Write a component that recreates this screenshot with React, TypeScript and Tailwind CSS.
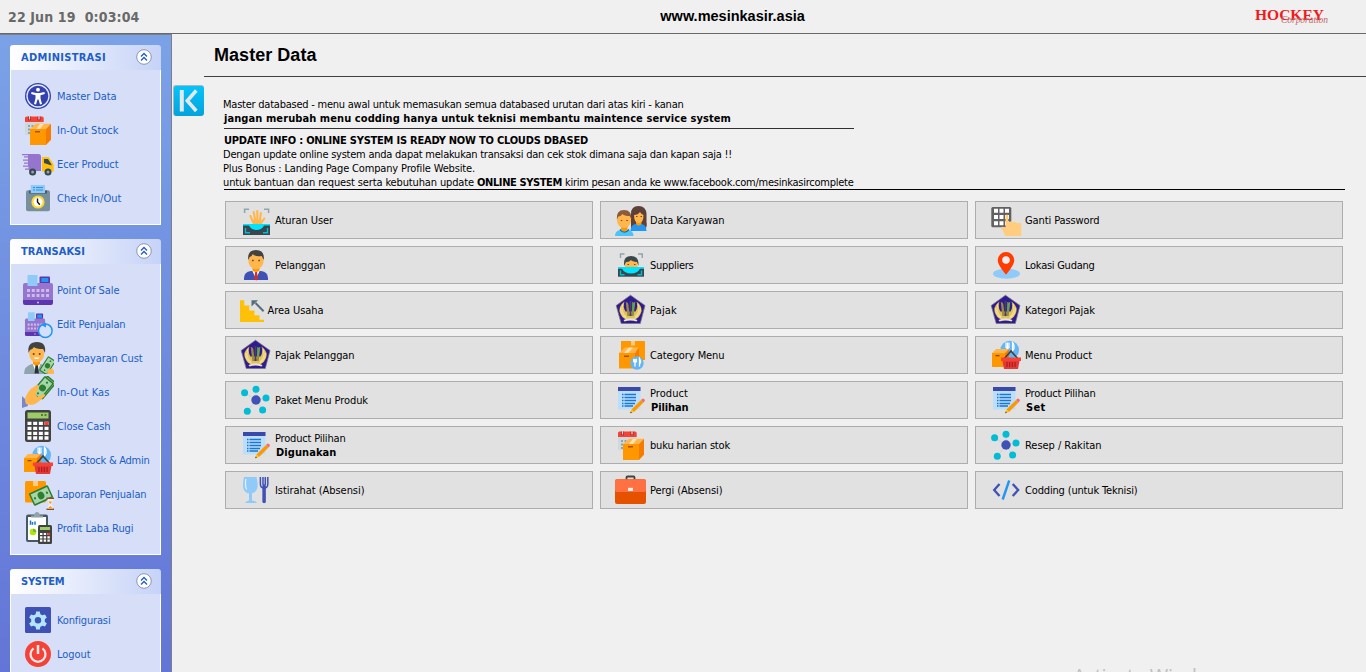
import { useLayoutEffect, useRef, useState, type ReactNode } from "react";

/* Text whose tracking is adjusted so that it fills a given width. */
function Fit({ w, className = "", children }: { w: number; className?: string; children: string }) {
  const ref = useRef<HTMLSpanElement>(null);
  const [spacing, setSpacing] = useState(0);
  useLayoutEffect(() => {
    if (ref.current) {
      const natural = ref.current.getBoundingClientRect().width;
      setSpacing((w - natural) / children.length);
    }
  }, []);
  return (
    <span ref={ref} className={`inline-block whitespace-pre ${className}`} style={{ letterSpacing: `${spacing}px` }}>
      {children}
    </span>
  );
}

function Svg({ children }: { children: ReactNode }) {
  return (
    <svg viewBox="0 0 32 32" className="h-8 w-8 shrink-0">
      {children}
    </svg>
  );
}

const AccessIcon = () => (
  <Svg>
    <circle cx="16" cy="16" r="13" fill="#3442ae" />
    <circle cx="16" cy="16" r="11" fill="none" stroke="#e4eaff" strokeWidth="1.3" />
    <circle cx="16" cy="9.7" r="1.9" fill="#fff" />
    <path d="M9.5 12l4.800 1h3.400l4.800-1 .3 1.900-4.300 1.400v3l1.500 5.600-2 .5-1.500-5h-1l-1.500 5-2-.5 1.500-5.600v-3l-4.300-1.400z" fill="#fff" />
  </Svg>
);

const StockIcon = () => (
  <Svg>
    <path d="M3 7h18.500v14H3z" fill="#cfd8dc" />
    <path d="M3 4q0-1.500 1.500-1.500H20q1.700 0 1.700 1.500v4H3z" fill="#f44336" />
    <path d="M7.500 2.500v3.800M17 2.500v3.800" stroke="#b71c1c" strokeWidth="3" />
    <path d="M7.500 2v3.500M17 2v3.500" stroke="#cfd8dc" strokeWidth="1.300" />
    <path d="M6 11h2v2H6zM9.500 11h2v2h-2zM6 14.500h2v2H6zM6 18h2v2H6z" fill="#90a4ae" />
    <path d="M8 15l6-5.300h15L24 15z" fill="#ffb74d" />
    <path d="M24 15l5-5.300v16L24 31z" fill="#f57c00" />
    <path d="M8 15h16v16H8z" fill="#ff9800" />
    <path d="M14 15l4-5.300h4L18 15z" fill="#ffe0b2" />
    <path d="M13 17h5v1.500h-5z" fill="#a65300" />
  </Svg>
);

const TruckIcon = () => (
  <Svg>
    <path d="M0 6h16.500q2.500 0 2.500 2.500V23H7v-1.300H3v-1.200h3.500v-1.700H1v-1.300h5v-1.700H2v-1.300h4v-1.700H1v-1.300h5V9.500H2V8.200h4V7.300H0z" fill="#9575cd" />
    <path d="M20 9h6.500l4 5.500q1.200 1.600 1.200 3.500v5.500H20z" fill="#ffc107" />
    <path d="M22 11h4l3.500 5.500v1L22 15z" fill="#37474f" />
    <circle cx="10.600" cy="24" r="3.500" fill="#37474f" />
    <circle cx="10.600" cy="24" r="1.500" fill="#90a4ae" />
    <circle cx="26" cy="24" r="3.500" fill="#37474f" />
    <circle cx="26" cy="24" r="1.500" fill="#90a4ae" />
  </Svg>
);

const ClockInIcon = () => (
  <Svg>
    <rect x="4" y="8.300" width="24" height="21" rx="2" fill="#78909c" />
    <path d="M7 8.500h18v3H7z" fill="#455a64" />
    <path d="M8.700 3H23v8H8.700z" fill="#90caf9" />
    <path d="M11 5.500h2m1 0h7M11 8h2m1 0h7" stroke="#2f8fe0" />
    <circle cx="16" cy="20" r="6.600" fill="#fdd835" />
    <circle cx="16" cy="20" r="4.500" fill="#fff" />
    <path d="M15.500 16.500V20l2.300 2.700" fill="none" stroke="#111" strokeWidth="1.400" />
  </Svg>
);

const Register = () => (
  <>
    <path d="M21 8h3v3h-3z" fill="#5e35b1" />
    <rect x="17.500" y="2.500" width="10.500" height="7" rx="1" fill="#5e35b1" />
    <path d="M19.300 4h7v4h-7z" fill="#2196f3" />
    <path d="M3 9H29q2 0 2 2v16H1V11q0-2 2-2z" fill="#9575cd" />
    <path d="M5.500 1h10v11h-10z" fill="#90caf9" />
    <path d="M1 26h30v3q0 2-2 2H3q-2 0-2-2z" fill="#5e35b1" />
    <path d="M5 16.500h22M5 21.500h22" stroke="#cdb9ea" strokeWidth="2.800" strokeDasharray="3 1.750" />
    <circle cx="16" cy="28.500" r="1" fill="#d1c4e9" />
  </>
);

const RegisterIcon = () => (
  <Svg>
    <Register />
  </Svg>
);

const RegisterEditIcon = () => (
  <Svg>
    <g transform="translate(2.300 3.500) scale(.67 .79)">
      <Register />
    </g>
    <circle cx="23.300" cy="22.700" r="6.800" fill="#d6dff7" stroke="#2196f3" strokeWidth="1.500" />
    <path d="M19 17l5-2.500v5z" fill="#2196f3" />
  </Svg>
);

const Bill = () => (
  <>
    <rect x="-10" y="-5.500" width="20" height="11" rx="1" fill="#2e7d32" />
    <rect x="-8.600" y="-4.200" width="17.200" height="8.400" fill="#a5d6a7" />
    <circle r="3.100" fill="#2e7d32" />
    <circle cx="-6.300" r="1" fill="#2e7d32" />
    <circle cx="6.300" r="1" fill="#2e7d32" />
  </>
);

const PayerIcon = () => (
  <Svg>
    <path d="M2 32q0-8 8-10h9q8 2 8 10z" fill="#90a4ae" />
    <path d="M10.500 21.500h8L14.700 32z" fill="#fff" />
    <path d="M13.500 23h2.400l1 8.500h-4.400z" fill="#263238" />
    <path d="M11 17h7v5q-3.500 3-7 0z" fill="#ff9800" />
    <ellipse cx="14.700" cy="12" rx="7.500" ry="8.500" fill="#ffb74d" />
    <path d="M6.500 11Q5 0 15 0q9.500 0 8 11l-2-4q-7 0-9-2-1 2-4 3z" fill="#424242" />
    <circle cx="11.700" cy="12" r="1" fill="#6d3b18" />
    <circle cx="17.700" cy="12" r="1" fill="#6d3b18" />
    <path d="M11.500 15.500q3.200 3 6.400 0z" fill="#fff" />
    <g transform="translate(25.500 23.700) rotate(-57) scale(.85)">
      <Bill />
    </g>
    <path d="M25 32l1-4 4-2 2 3v3z" fill="#ffb74d" />
  </Svg>
);

const CashHandIcon = () => (
  <Svg>
    <path d="M0 20l5 5 1 5-6 2z" fill="#7986cb" />
    <g transform="translate(23 11.500) rotate(-50) scale(1.100)">
      <Bill />
    </g>
    <g transform="translate(20.500 12) rotate(-50) scale(1.100)">
      <Bill />
    </g>
    <path d="M4 28q-2-5 0-8 3-6 6-8l5-3q2.500 0 1.500 3l-3 6 2 3 6-3q2.500 0 1 2.500l-7 6q-4 3.500-9 2z" fill="#ffb74d" />
  </Svg>
);

const CalcIcon = () => (
  <Svg>
    <rect x="3" y="0" width="26" height="32" rx="2.500" fill="#424242" />
    <rect x="5.500" y="2.500" width="21" height="6" fill="#9ccc65" />
    <path d="M19 5h2m1.500 0h2" stroke="#33691e" strokeWidth="1.300" />
    <path d="M5.500 13.300h21M5.500 18.300h21M5.500 23.300h21M5.500 28h21" stroke="#fff" strokeWidth="3.300" strokeDasharray="4 1.670" />
    <path d="M22.500 11.600h4V15h-4z" fill="#f44336" />
  </Svg>
);

const BasketIcon = () => (
  <Svg>
    <circle cx="19.700" cy="11" r="9.300" fill="#64b5f6" />
    <path d="M16 3.500v5q1.500 1.500 3 0v-5M17.500 3.500v8M22.500 12V3.500q2 2 1.500 6z" fill="none" stroke="#fff" strokeWidth="1.200" />
    <path d="M2 14l4-4h13v4z" fill="#ffb74d" />
    <path d="M2 14h13v14H2z" fill="#ff9800" />
    <path d="M15 14l4-4v11l-4 6z" fill="#f57c00" />
    <path d="M5.500 16h4v1.300h-4z" fill="#8d4a00" />
    <path d="M14 20l7-8 7 8" fill="none" stroke="#37474f" strokeWidth="1.800" />
    <path d="M11 18.500h20v3.500H11z" fill="#f44336" />
    <path d="M12.500 22h17L28 30H14z" fill="#e53935" />
    <path d="M17 23v5m2.700-5v5m2.700-5v5m2.700-5v5" stroke="#b01e1e" strokeWidth="1.300" />
  </Svg>
);

const SalesReportIcon = () => (
  <Svg>
    <rect x="3" y="3" width="21" height="21.500" rx="1.500" fill="#ff9800" />
    <path d="M11 3h5v5h-5z" fill="#ffcc80" />
    <g transform="translate(19 17.500) rotate(-25) scale(1.050 1.250)">
      <Bill />
    </g>
    <path d="M24.500 20.300h7.500M24.500 31.300h7.500" stroke="#8d4a2b" strokeWidth="1.500" />
    <path d="M25.500 21h5.500q0 3-2 5 2 2 2 4.500h-5.500q0-2.500 2-4.500-2-2-2-5z" fill="#eceff1" />
    <path d="M26.500 23.500h3.500L28.300 26zM25.800 30.500l2.500-2.500 2.500 2.500z" fill="#ff9800" />
  </Svg>
);

const ProfitIcon = () => (
  <Svg>
    <rect x="4" y="2.500" width="22" height="27.500" rx="2" fill="#455a64" />
    <path d="M6 5h18v23H6z" fill="#fff" />
    <path d="M9 5.500V3.500h3Q12.500 0 15 0t3 3.500h3v2z" fill="#90a4ae" />
    <path d="M8.500 8.500v4.200M10.500 10v2.700M13 9.500v3.200" stroke="#1976d2" strokeWidth="1.500" />
    <circle cx="11" cy="20" r="3.300" fill="#aeea00" />
    <path d="M11 20v-3.300a3.300 3.300 0 013.300 3.300z" fill="#7cb342" />
    <rect x="16" y="13" width="14" height="19" rx="1.500" fill="#424242" />
    <path d="M18 15h10v3H18z" fill="#9ccc65" />
    <path d="M18 22h10M18 25.300h10M18 28.700h10" stroke="#fff" strokeWidth="2.200" strokeDasharray="2.400 1.300" />
    <path d="M25.400 20.900H28v2.200h-2.600z" fill="#f44336" />
  </Svg>
);

const GearIcon = () => (
  <Svg>
    <rect x="3" y="3" width="26" height="26" rx="1.500" fill="#3f51b5" />
    <path
      d="M14.200 7.500h3.600l.6 2.700 2 1.100 2.600-.9 1.800 3.100-2 1.800v2.400l2 1.800-1.800 3.100-2.600-.9-2 1.100-.6 2.700h-3.600l-.6-2.700-2-1.100-2.600.9-1.800-3.100 2-1.800v-2.400l-2-1.800L9 10.400l2.600.9 2-1.100z"
      fill="#b3e5fc"
    />
    <circle cx="16" cy="16.200" r="3.200" fill="#3f51b5" />
  </Svg>
);

const PowerIcon = () => (
  <Svg>
    <circle cx="16" cy="16" r="13" fill="#f44336" />
    <path d="M11.500 10.300a7.500 7.500 0 109 0" fill="none" stroke="#ffebee" strokeWidth="2.200" />
    <path d="M16 7v9" stroke="#ffebee" strokeWidth="2.500" />
  </Svg>
);

const HandScanIcon = () => (
  <Svg>
    <path d="M4.600 9V5.200h4.500M24 5.200h4.600V9" fill="none" stroke="#90a4ae" strokeWidth="1.500" />
    <path d="M10.500 12l2.500 6M13.700 8l1.600 9M17.300 7v10M20.800 9l-1 8M24.300 14.500L20.500 20" stroke="#ffb74d" strokeWidth="2.100" strokeLinecap="round" />
    <path d="M11 15.500h10.500v4L19 22h-5z" fill="#ffb74d" />
    <path d="M3 20h27v11H3z" fill="#37474f" />
    <path d="M3 20h27v1.600h-6Q22 26 16.500 26T9 21.600H3z" fill="#00e5ff" />
    <path d="M5.500 24v4.700H10M27.500 24v4.700H23" fill="none" stroke="#00bcd4" strokeWidth="1.400" />
  </Svg>
);

const CustomerIcon = () => (
  <Svg>
    <path d="M4 31v-2q0-6 7-7h10q7 1 7 7v2z" fill="#3f51b5" />
    <path d="M12 21h8l-4 9z" fill="#fff" />
    <path d="M15.200 23h1.800l1 7-1.800 1.500-2-1.500z" fill="#d32f2f" />
    <path d="M12.500 18h7v3.500q-3.500 3-7 0z" fill="#ff9800" />
    <ellipse cx="16" cy="12" rx="7.600" ry="8.300" fill="#ffb74d" />
    <path d="M8.300 11Q7 1 16 1t7.700 10l-2-4q-6 1-9-2-1 3-3 3z" fill="#424242" />
    <path d="M12 11.500h1.700m4.600 0H20" stroke="#784719" strokeWidth="1.400" />
  </Svg>
);

const StairsIcon = () => (
  <Svg>
    <path d="M0 6.300h4.300v5.200h5v5h5.200v4.800h5v4.500H24V28H0z" fill="#ffc107" />
    <path d="M23.600 17.200L15.500 9" stroke="#546e7a" strokeWidth="2" />
    <path d="M11.500 6.200h6.600l-6.600 6.200z" fill="#546e7a" />
  </Svg>
);

const TaxIcon = () => (
  <Svg>
    <path d="M15.500 1.200L30 11.500 25.300 29.500H6.200L1.200 11.500z" fill="#311b92" stroke="#777" strokeWidth=".7" />
    <path d="M9.500 7.500Q2 13 5.500 20q2.500 6 10 6t10-6Q29 13 21.500 7.500q2 5-1 10h-10q-3-5-1-10z" fill="#e0c25c" />
    <path d="M8 10q-3 7 3 13M23 10q3 7-3 13M5.500 14q0 7 6 10.500M25.500 14q0 7-6 10.500" fill="none" stroke="#f4e08f" strokeWidth="1.100" />
    <path d="M10.800 8q2 0 2.500 2l1.200 10h2l1.200-10q.5-2 2.500-2l-1.500 14h-6.400z" fill="#9a8a45" />
    <path d="M15.500 7v15" stroke="#4a3d62" strokeWidth="1.800" />
    <path d="M17.800 8v10l1.500-9" fill="none" stroke="#4caf50" strokeWidth="1.100" />
    <path d="M8.500 26q7-3.500 14 0l-1 1.600q-6-2-12 0z" fill="#e8e5d5" />
  </Svg>
);

const NetworkIcon = () => (
  <Svg>
    <path d="M4.500 8.500L16 16l6.500 10M16 5v11l-8.700 11.300M26 14l-10 2" fill="none" stroke="#cfd8dc" strokeWidth="1.300" />
    <circle cx="16" cy="16" r="4.700" fill="#3f51b5" />
    <g fill="#00bcd4">
      <circle cx="4.600" cy="8.700" r="3.500" />
      <circle cx="16" cy="5.300" r="3.500" />
      <circle cx="26" cy="14" r="3.500" />
      <circle cx="22.600" cy="26" r="3.500" />
      <circle cx="7.300" cy="27.300" r="3.500" />
    </g>
  </Svg>
);

const FormIcon = () => (
  <Svg>
    <path d="M3 3h22.500v22.500H3z" fill="#bbdefb" />
    <path d="M3 3h22.500v4H3z" fill="#3949ab" />
    <path d="M7 10.500h1.500m1 0H21M7 13.500h1.500m1 0H21M7 16.500h1.500m1 0H21M7 19.500h1.500m1 0H20M7 22h1.500m1 0H18" stroke="#1976d2" strokeWidth="1.300" />
    <path d="M16.500 25.500L26 16l2.500 2.500L19 28z" fill="#ff9800" />
    <path d="M26 16l1.300-1.300q.8-.6 1.600.2l.7.700q.6.800 0 1.600l-1.100 1.300z" fill="#ef6c74" />
    <path d="M16.500 25.500L19 28l-4 1.300z" fill="#ffc107" />
    <path d="M15.800 27.500l1.200 1.200-2 .6z" fill="#37474f" />
  </Svg>
);

const MealIcon = () => (
  <Svg>
    <path d="M4 3h12.500Q18.500 11 17 15q-1.500 3.800-5 4.300v7.200q4 .5 5 2.500H5q1-2 4-2.500v-7.200Q5 19 3.500 15 2.300 11 4 3z" fill="#90caf9" />
    <path d="M5.800 5q-1 8 1 10.500" fill="none" stroke="#e3f2fd" strokeWidth="1.200" />
    <path d="M20.400 3v7q0 4 3.700 4t3.700-4V3M23 3v8M25.300 3v8" fill="none" stroke="#3f51b5" strokeWidth="1.500" />
    <path d="M24.100 12v15.500" stroke="#3f51b5" strokeWidth="3.500" strokeLinecap="round" />
  </Svg>
);

const StaffIcon = () => (
  <Svg>
    <path d="M16 25V10q0-8 7.500-8t8 8v8q1 6-2 7z" fill="#5d4037" />
    <path d="M15.500 27q0-6 5-7h6q5 1 5 7z" fill="#2196f3" />
    <path d="M21 17h5.500v3q-2.700 3-5.500 0z" fill="#ff9800" />
    <path d="M19 11q4 0 6-3 1 2 3.500 3 0 8-4.700 8T19 11z" fill="#ffb74d" />
    <path d="M0 32q0-5 5-6h8.500q5 1 5 6z" fill="#4fc3f7" />
    <path d="M5 25.500q4.500 5 9 0" fill="none" stroke="#0277bd" strokeWidth="1.500" />
    <path d="M6 22h6.500v4q-3.200 3-6.500 0z" fill="#ff9800" />
    <ellipse cx="9" cy="16.500" rx="7" ry="7.500" fill="#ffb74d" />
    <path d="M1.800 15.500Q1 6 9 6t7.500 9.500l-2-3.500q-5 0-7-2-2 2.500-4 2.500z" fill="#8d5a3b" />
    <path d="M5.800 16.500h1.500m4 0h1.500M21 12.500h1.500m3 0H27" stroke="#784719" strokeWidth="1.200" />
  </Svg>
);

const FaceScanIcon = () => (
  <Svg>
    <path d="M5.500 9V5h4M23 5h4.300v4" fill="none" stroke="#90a4ae" strokeWidth="1.400" />
    <path d="M10 19V11q6-3 12.500 0v8z" fill="#ffb74d" />
    <path d="M9 17V14q0-7 7-7t7.500 7v3l-1.500-4q-5-.5-6-2-2 2.500-5 2z" fill="#37474f" />
    <path d="M12.500 15.500H14m5 0h1.500" stroke="#784719" strokeWidth="1.200" />
    <path d="M3 18h26v9.700H3z" fill="#37474f" />
    <path d="M3 18h26v1.700h-4Q22.500 24.500 16 24.500T7 19.700H3z" fill="#00e5ff" />
    <path d="M5.500 21.500v4.200h4M26.500 21.500v4.200h-4" fill="none" stroke="#00bcd4" strokeWidth="1.400" />
  </Svg>
);

const CategoryIcon = () => (
  <Svg>
    <path d="M6 2h23q1 0 1 1v18h-8V13H6z" fill="#ff9800" />
    <path d="M16 2h4v4.500h-4z" fill="#ffcc80" />
    <path d="M4 14l6-5.500h14L20 14z" fill="#ffb74d" />
    <path d="M4 14h16v15.500H4z" fill="#ff9800" />
    <path d="M20 14l4-5.500V29h-4z" fill="#f57c00" />
    <path d="M9 14l5-5.500h4L13 14z" fill="#ffe0b2" />
    <path d="M9 16.500h5v1.500H9z" fill="#a65300" />
    <circle cx="22" cy="24" r="6.700" fill="#64b5f6" />
    <path d="M18.700 19.800v2.700q1.500 1.500 2.700 0v-2.700M20 20v7.500M24.500 27.500v-8q1.500 2 .8 5" fill="none" stroke="#fff" strokeWidth="1.300" />
  </Svg>
);

const KeypadIcon = () => (
  <Svg>
    <rect x="1.300" y="3" width="20" height="20.300" rx="1.500" fill="#616161" />
    <path d="M4 6.800h15M4 13h15M4 19.300h15" stroke="#fff" strokeWidth="4" strokeDasharray="4 1.500" />
    <path d="M15.500 12q0-1.600 1.400-1.600T18.300 12v6l3-.7 1.500 1 3-.3 1.500 1.200 3-.3q1 .3 1 1.500V32H15q-1-4-4-8 1-2.500 4.500 0z" fill="#ffcc80" />
  </Svg>
);

const PinIcon = () => (
  <Svg>
    <ellipse cx="16.500" cy="24.700" rx="13.500" ry="5" fill="#90caf9" />
    <path d="M16 25.700Q7.700 16 7.700 11.300a8.300 8.300 0 0116.600 0Q24.300 16 16 25.700z" fill="#ff3d00" />
    <circle cx="16" cy="11" r="3.800" fill="#eceff1" />
  </Svg>
);

const BriefcaseIcon = () => (
  <Svg>
    <path d="M11.500 6V3.500q0-1 1-1h6q1 0 1 1V6" fill="none" stroke="#424242" strokeWidth="1.800" />
    <rect x="0" y="5.300" width="31" height="24.700" rx="2" fill="#e65100" />
    <path d="M0 7.300q0-2 2-2h27q2 0 2 2V16q0 2-2 2H2q-2 0-2-2z" fill="#ff7043" />
    <path d="M13 13.800h5V17h-5z" fill="#fff3e0" />
  </Svg>
);

const CodeIcon = () => (
  <Svg>
    <path d="M9.500 10L4.200 16l5.300 6M22.700 10l5.500 6-5.500 6" fill="none" stroke="#3f51b5" strokeWidth="2.300" />
    <path d="M19.200 6.500l-6.500 19" stroke="#2196f3" strokeWidth="2.400" />
  </Svg>
);

type Item = { icon: () => ReactNode; label: string; w: number };

const groups: { title: string; w: number; items: Item[] }[] = [
  {
    title: "ADMINISTRASI",
    w: 85,
    items: [
      { icon: AccessIcon, label: "Master Data", w: 59.5 },
      { icon: StockIcon, label: "In-Out Stock", w: 61.5 },
      { icon: TruckIcon, label: "Ecer Product", w: 61.5 },
      { icon: ClockInIcon, label: "Check In/Out", w: 64.5 },
    ],
  },
  {
    title: "TRANSAKSI",
    w: 64,
    items: [
      { icon: RegisterIcon, label: "Point Of Sale", w: 62.5 },
      { icon: RegisterEditIcon, label: "Edit Penjualan", w: 68.5 },
      { icon: PayerIcon, label: "Pembayaran Cust", w: 85.5 },
      { icon: CashHandIcon, label: "In-Out Kas", w: 52.5 },
      { icon: CalcIcon, label: "Close Cash", w: 53.5 },
      { icon: BasketIcon, label: "Lap. Stock & Admin", w: 92.5 },
      { icon: SalesReportIcon, label: "Laporan Penjualan", w: 89.5 },
      { icon: ProfitIcon, label: "Profit Laba Rugi", w: 76.5 },
    ],
  },
  {
    title: "SYSTEM",
    w: 43.5,
    items: [
      { icon: GearIcon, label: "Konfigurasi", w: 53.5 },
      { icon: PowerIcon, label: "Logout", w: 33.5 },
    ],
  },
];

const buttons: (Item & { bold?: string; boldW?: number; tight?: boolean })[] = [
  { icon: HandScanIcon, label: "Aturan User", w: 58 },
  { icon: StaffIcon, label: "Data Karyawan", w: 74.5 },
  { icon: KeypadIcon, label: "Ganti Password", w: 74.5 },
  { icon: CustomerIcon, label: "Pelanggan", w: 50.5 },
  { icon: FaceScanIcon, label: "Suppliers", w: 43.5 },
  { icon: PinIcon, label: "Lokasi Gudang", w: 69.5 },
  { icon: StairsIcon, label: "Area Usaha", w: 56, tight: true },
  { icon: TaxIcon, label: "Pajak", w: 27 },
  { icon: TaxIcon, label: "Kategori Pajak", w: 70 },
  { icon: TaxIcon, label: "Pajak Pelanggan", w: 79.5 },
  { icon: CategoryIcon, label: "Category Menu", w: 74.5 },
  { icon: BasketIcon, label: "Menu Product", w: 67 },
  { icon: NetworkIcon, label: "Paket Menu Produk", w: 93 },
  { icon: FormIcon, label: "Product", w: 38, bold: "Pilihan", boldW: 37.5 },
  { icon: FormIcon, label: "Product Pilihan", w: 70.5, bold: "Set", boldW: 19.5 },
  { icon: FormIcon, label: "Product Pilihan", w: 70.5, bold: "Digunakan", boldW: 60.5 },
  { icon: StockIcon, label: "buku harian stok", w: 80 },
  { icon: NetworkIcon, label: "Resep / Rakitan", w: 76.5 },
  { icon: MealIcon, label: "Istirahat (Absensi)", w: 89.5 },
  { icon: BriefcaseIcon, label: "Pergi (Absensi)", w: 72.5 },
  { icon: CodeIcon, label: "Codding (untuk Teknisi)", w: 112.5 },
];

function Group({ title, w, items }: (typeof groups)[number]) {
  return (
    <section className="shrink-0">
      <header className="flex h-[25px] items-center justify-between rounded-t-[3px] bg-linear-to-r from-white to-[#c6d3f7] pr-[9px] pl-[11px] font-bold">
        <Fit w={w}>{title}</Fit>
        <svg viewBox="0 0 16 16" className="mb-px h-4 w-4" fill="none">
          <circle cx="8" cy="8" r="7.300" fill="#fff" stroke="#8b95b5" />
          <path d="M5 7.500l3-3 3 3M5 11.500l3-3 3 3" stroke="#215dc6" strokeWidth="1.300" />
        </svg>
      </header>
      <ul className="border border-t-0 border-white bg-[#d6dff7] py-[9px] pl-[11px]">
        {items.map(({ icon: Icon, label, w: width }) => (
          <li key={label} className="flex h-[34px] items-center gap-[3px]">
            <Icon />
            <span className="flex flex-col items-start pt-0.5">
              <Fit w={width}>{label}</Fit>
            </span>
          </li>
        ))}
      </ul>
    </section>
  );
}

export default function App() {
  return (
    <div className="flex h-[672px] w-[1366px] flex-col overflow-hidden bg-[#f0f0f0] font-['DejaVu_Sans_Condensed','DejaVu_Sans',sans-serif] text-[11px] leading-[14px] text-black">
      <header className="grid h-[34px] shrink-0 grid-cols-3 items-center border-b border-[#696969]">
        <Fit w={131.5} className="ml-2 justify-self-start text-[14px] font-bold text-[#696969]">
          {"22 Jun 19  0:03:04"}
        </Fit>
        <Fit w={144.5} className="mb-px ml-[205px] justify-self-start font-['Liberation_Sans',sans-serif] text-[14.500px] font-bold">
          www.mesinkasir.asia
        </Fit>
        <div className="relative mr-[37px] h-[18px] w-[74px] justify-self-end font-['Liberation_Serif',serif]">
          <Fit w={69} className="text-[15.500px] leading-[14px] font-bold text-[#ee1c20]">HOCKEY</Fit>
          <Fit w={47} className="absolute top-[8px] left-[26px] text-[9.500px] leading-[9px] text-[#bf6a6a] italic">Corporation</Fit>
        </div>
      </header>

      <div className="flex min-h-0 flex-1">
        <nav className="flex w-[172px] shrink-0 flex-col gap-[14px] overflow-hidden border-t border-r border-[#7c7f88] bg-linear-to-b from-[#7ba2e7] to-[#6375d6] px-[10px] pt-[10px] text-[#215dc6]">
          {groups.map((g) => (
            <Group key={g.title} {...g} />
          ))}
        </nav>

        <button className="mt-[51px] mr-px ml-px flex h-[31px] w-[31px] shrink-0 items-center justify-center rounded-[3px] border-t border-l border-[#a9b6ba] bg-linear-to-b from-[#05c3fa] to-[#04a3dc]">
          <svg viewBox="1 1 30 30" className="h-[30px] w-[30px]" fill="none" stroke="#e3e8ea">
            <path d="M8.800 5v21.500" strokeWidth="4" />
            <path d="M23.300 5.500l-9 10.300 9 10.200" strokeWidth="3.600" />
          </svg>
        </button>

        <main className="flex min-w-0 flex-1 flex-col">
          <div className="-ml-px flex h-[43px] shrink-0 items-center border-b border-[#404040] pl-[10px]">
            <Fit w={102.5} className="font-['Liberation_Sans',sans-serif] text-[18px] leading-5 font-bold">
              Master Data
            </Fit>
          </div>
          <div className="pt-[21px] pl-[18px]">
            <div className="ml-px flex h-[31px] w-[630px] flex-col items-start border-b border-[#303030]">
              <Fit w={460.5} className="-ml-px">Master databased - menu awal untuk memasukan semua databased urutan dari atas kiri - kanan</Fit>
              <Fit w={507} className="font-bold">jangan merubah menu codding hanya untuk teknisi membantu maintence service system</Fit>
            </div>
            <div className="mr-[21px] ml-px flex h-[61px] flex-col items-start border-b border-black pt-[5px]">
              <Fit w={364} className="font-bold">UPDATE INFO : ONLINE SYSTEM IS READY NOW TO CLOUDS DBASED</Fit>
              <Fit w={509} className="-ml-px">Dengan update online system anda dapat melakukan transaksi dan cek stok dimana saja dan kapan saja !!</Fit>
              <Fit w={252} className="-ml-px">Plus Bonus : Landing Page Company Profile Website.</Fit>
              <p className="-ml-px flex whitespace-pre">
                <Fit w={254}>{"untuk bantuan dan request serta kebutuhan update "}</Fit>
                <Fit w={88} className="font-bold">{"ONLINE SYSTEM "}</Fit>
                <Fit w={288.5}>kirim pesan anda ke www.facebook.com/mesinkasircomplete</Fit>
              </p>
            </div>
          </div>
          <div className="mt-[11px] ml-[20px] grid grid-cols-[repeat(3,368px)] gap-[7px]">
            {buttons.map(({ icon: Icon, label, w, bold, boldW, tight }, i) => (
              <button key={i} className="flex h-[38px] items-center border border-[#adadad] bg-[#e1e1e1] pl-[14px] text-left">
                <Icon />
                <span className={tight ? "-ml-[4.500px] flex flex-col items-start pt-0.5" : "ml-[3px] flex flex-col items-start pt-0.5"}>
                  <Fit w={w}>{label}</Fit>
                  {bold && (
                    <Fit w={boldW ?? 0} className="ml-px font-bold">
                      {bold}
                    </Fit>
                  )}
                </span>
              </button>
            ))}
          </div>
          <p className="mt-auto mr-[133px] h-[7px] self-end font-['Open_Sans',sans-serif] text-[20px] leading-[22px] whitespace-nowrap text-[#c0c0c0]">
            <Fit w={160}>Activate Windows</Fit>
          </p>
        </main>
      </div>
    </div>
  );
}
